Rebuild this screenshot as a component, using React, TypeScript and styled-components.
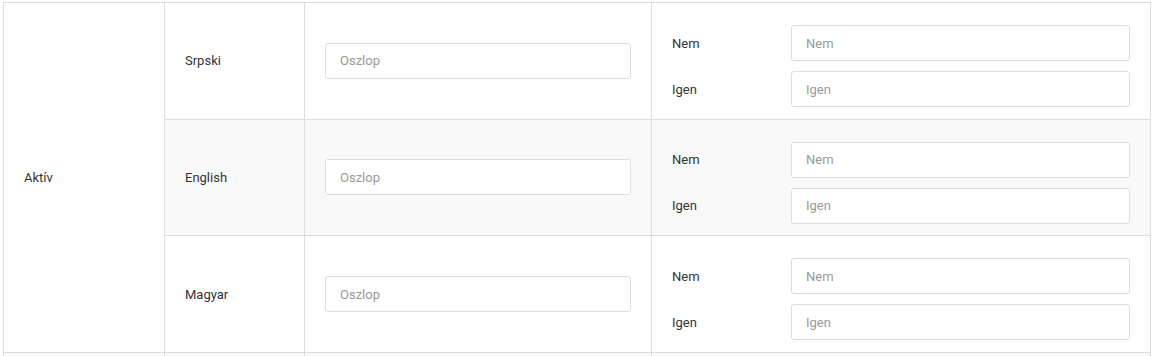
import styled, { createGlobalStyle } from "styled-components";

const GlobalStyle = createGlobalStyle`
  body {
    margin: 0;
    background: #fff;
    font-family: Roboto, "Liberation Sans", Arial, sans-serif;
    font-size: 13px;
    color: #333;
  }
`;

const Wrapper = styled.div`
  padding: 2px 4px 0 3px;
`;

const Table = styled.table`
  width: 1148px;
  table-layout: fixed;
  border-collapse: collapse;
  border: 1px solid #ddd;

  tbody tr:nth-child(even) {
    background: #f9f9f9;
  }
`;

const Cell = styled.td`
  border: 1px solid #ddd;
  padding: 0 20px;
  vertical-align: middle;
  font-size: 13px;
  color: #333;
`;

const OptionsCell = styled(Cell)`
  padding: 22px 20px 11.67px 20px;
`;

const TextInput = styled.input`
  display: block;
  box-sizing: border-box;
  width: 100%;
  height: 36px;
  padding: 0 14px;
  border: 1px solid #ddd;
  border-radius: 3px;
  background: #fff;
  font-family: Roboto, "Liberation Sans", Arial, sans-serif;
  font-size: 13px;
  color: #333;
  outline: none;

  &::placeholder {
    color: #999;
  }
`;

const OptionRow = styled.div`
  display: grid;
  grid-template-columns: 119px 1fr;
  align-items: center;

  & + & {
    margin-top: 10px;
  }
`;

const OptionLabel = styled.label`
  font-size: 13px;
  color: #333;
`;

const EmptyRow = styled.tr`
  height: 40px;
`;

const languages = ["Srpski", "English", "Magyar"];

export default function App() {
  return (
    <Wrapper>
      <GlobalStyle />
      <Table>
        <colgroup>
          <col style={{ width: 161 }} />
          <col style={{ width: 140 }} />
          <col style={{ width: 347 }} />
          <col />
        </colgroup>
        <tbody>
          {languages.map((lang, i) => (
            <tr key={lang}>
              {i === 0 && <Cell rowSpan={3}>Aktív</Cell>}
              <Cell>{lang}</Cell>
              <Cell>
                <TextInput placeholder="Oszlop" />
              </Cell>
              <OptionsCell>
                <OptionRow>
                  <OptionLabel>Nem</OptionLabel>
                  <TextInput placeholder="Nem" />
                </OptionRow>
                <OptionRow>
                  <OptionLabel>Igen</OptionLabel>
                  <TextInput placeholder="Igen" />
                </OptionRow>
              </OptionsCell>
            </tr>
          ))}
          <EmptyRow>
            <Cell />
            <Cell />
            <Cell />
            <Cell />
          </EmptyRow>
        </tbody>
      </Table>
    </Wrapper>
  );
}
